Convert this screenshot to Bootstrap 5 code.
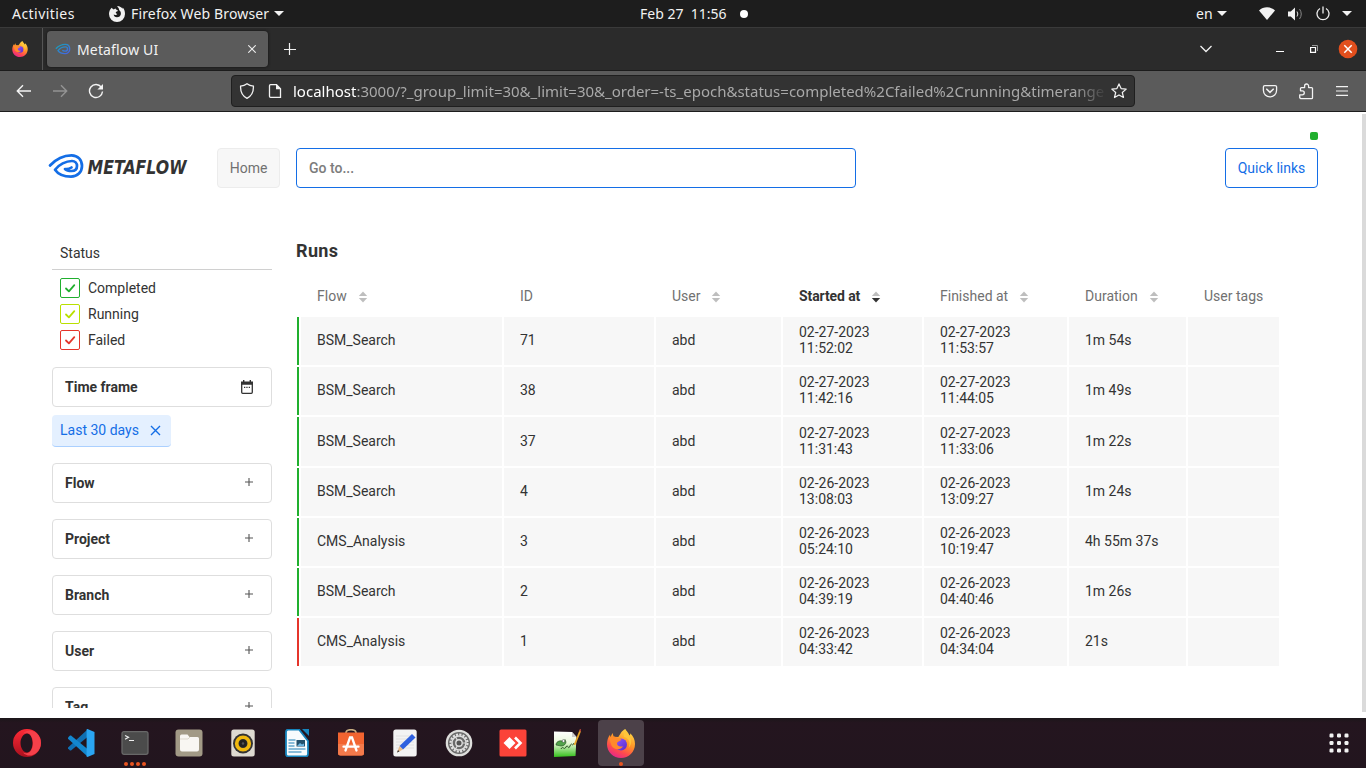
<!DOCTYPE html>
<html lang="en">
<head>
<meta charset="utf-8">
<meta name="viewport" content="width=device-width, initial-scale=1">
<title>Metaflow UI</title>
<link href="https://cdn.jsdelivr.net/npm/bootstrap@5.3.0/dist/css/bootstrap.min.css" rel="stylesheet">
<style>
  html, body { height: 100%; }
  body { width: 1366px; height: 768px; font-family: Roboto, sans-serif; font-size: 14px; line-height: 16px; color: #333; background: #fff; }
  svg { display: block; flex: none; }
  .sys { font-family: "Noto Sans", "Open Sans", sans-serif; font-size: 14px; line-height: 20px; color: #f2f2f2; white-space: nowrap; }
  .topbar { height: 27px; background: #1d1d1d; }
  .tabbar { height: 44px; background: #2b2b2b; border-top: 1px solid #3a3a3a; border-bottom: 1px solid #1c1c1c; }
  .pinned { width: 43px; border-right: 1px solid #555; }
  .browser-tab { width: 221px; height: 36px; margin: 3px 0 0 4px; background: #5b5b5b; border-radius: 4px; box-shadow: 0 0 3px #111; padding-left: 8px; }
  .toolbar { height: 41px; background: #5b5b5b; border-bottom: 1px solid #1c1c1c; }
  .urlbar { width: 904px; height: 32px; background: #333; border: 1px solid #1f1f1f; border-radius: 4px; }
  .url { width: 814px; overflow: hidden; font-size: 15px; color: #a9a9a9; -webkit-mask-image: linear-gradient(90deg, #000 96%, transparent); mask-image: linear-gradient(90deg, #000 96%, transparent); }
  .url b { font-weight: 400; color: #fff; }
  .caret { width: 0; height: 0; border: 5px solid transparent; border-top-color: #f2f2f2; border-bottom: 0; }

  .viewport { height: 606px; }
  .scroller { width: 4px; height: 598px; top: 2px; left: 1362px; background: #dadada; }
  .online { width: 8px; height: 8px; top: 20px; left: 1310px; background: #20af2e; border-radius: 2px; }
  .page-head { padding: 36px 48px 0; height: 76px; }
  .btn-mf { height: 40px; font-size: 14px; line-height: 16px; padding: 11px 11px; border-radius: 4px; }
  .btn-home { --bs-btn-color: #717171; --bs-btn-bg: #f7f7f7; --bs-btn-border-color: #ececec; width: 63px; }
  .btn-quick { --bs-btn-color: #146ee6; --bs-btn-bg: #fff; --bs-btn-border-color: #146ee6; width: 93px; }
  .goto { width: 560px; height: 40px; font-size: 14px; font-weight: 500; border: 1px solid #146ee6; border-radius: 4px; padding: 0 12px; }
  .goto::placeholder { color: #7c7c7c; opacity: 1; }

  .page-body { height: 520px; padding-left: 52px; }
  .filters { width: 220px; }
  .filter-title { height: 33px; padding: 8px 8px 0; border-bottom: 1px solid #d0d0d0; }
  .status-row { height: 26px; }
  .tick { width: 20px; height: 20px; border: 1px solid; border-radius: 2px; }
  .tick svg { margin: 3px 0 0 3px; }
  .fbox { height: 40px; border: 1px solid #dedede; border-radius: 4px; padding: 0 16px 0 12px; flex: none; }
  .fbox .plus { margin: 0 2px 2px 0; }
  .chip { width: 119px; height: 32px; color: #146ee6; background: #e4f0ff; border-bottom: 1px solid #abd0ff; border-radius: 4px; padding: 0 10px 1px 8px; }

  h1.runs-title { font-size: 18px; line-height: 22px; font-weight: 700; letter-spacing: .35px; margin: 16px 0 0 1px; }
  .runs { table-layout: fixed; width: 986px; border-collapse: separate; border-spacing: 2px; margin: 11.18px 0 0 0; }
  .runs th { height: 40px; font-weight: 400; color: #717171; padding: 2px 0 0 16px; white-space: nowrap; vertical-align: middle; }
  .runs th svg { display: inline-block; margin-left: 7.5px; vertical-align: -2px; }
  .runs th.sorted { color: #333; font-weight: 700; letter-spacing: -.1px; }
  .runs th.sorted svg { margin-left: 7px; }
  .runs td { height: 48.17px; background: #f7f7f7; padding: 0 16px 2px; vertical-align: middle; }
  .runs td:first-child { padding: 0; background: #20af2e; }
  .runs tr.failed td:first-child { background: #e5352b; }

  .dock { height: 50px; background: linear-gradient(#1c161a, #24151f 5px, #22151e); }
  .dock-item { width: 54px; height: 50px; }
  .dock-item.active::before { content: ""; position: absolute; left: 4px; top: 2px; width: 46px; height: 46px; border-radius: 4px; background: #4c4149; }
  .dock-item svg { position: relative; }
  .pips { left: 0; right: 0; bottom: 2px; gap: 2px; }
  .pips i { width: 4px; height: 4px; border-radius: 50%; background: #e95420; }
</style>
</head>
<body class="d-flex flex-column overflow-hidden">

<svg width="0" height="0" class="position-absolute" aria-hidden="true">
  <defs>
    <linearGradient id="ffo" x1=".8" y1="0" x2=".3" y2="1"><stop offset="0" stop-color="#ffe14a"/><stop offset=".45" stop-color="#ff9426"/><stop offset=".75" stop-color="#ff4a4e"/><stop offset="1" stop-color="#e5258c"/></linearGradient>
    <linearGradient id="ffp" x1="0" y1="0" x2="1" y2="1"><stop offset="0" stop-color="#9059ff"/><stop offset="1" stop-color="#592acb"/></linearGradient>
    <linearGradient id="mfg" x1="0" y1="0" x2="1" y2="1"><stop offset="0" stop-color="#12a5b5"/><stop offset="1" stop-color="#4a62e8"/></linearGradient>
    <linearGradient id="opr" x1="0" y1="0" x2="0" y2="1"><stop offset="0" stop-color="#ff2a36"/><stop offset="1" stop-color="#a8101e"/></linearGradient>
    <linearGradient id="npp" x1="0" y1="0" x2="0" y2="1"><stop offset="0" stop-color="#fff"/><stop offset=".45" stop-color="#e8f8d8"/><stop offset="1" stop-color="#35c01c"/></linearGradient>
    <symbol id="firefox" viewBox="0 0 28 29">
      <path d="M18.300 0c1 2.400 3.400 3.600 4.200 6.600.7-.5.900-1.400.8-2.300C26.500 7.500 28 11 28 15c0 8-6.300 14-14 14S0 23 0 15.300C0 11.800 1 8 3 5.700l.4 2.600L5.500 4l1.200 3.700 4.600.200C13.500 5 14.300 2 18.300 0z" fill="url(#ffo)"/>
      <circle cx="14" cy="15.500" r="6" fill="url(#ffp)"/>
      <path d="M2 9c2-1.800 6-2 8.600.200l3.600 1.100c-.3 1.900-3.600 2-4.200 3.700-.2 2.600 2.500 4.500 6 3.200-2 4-9 4.300-11.500-.7z" fill="#ff8a2b"/>
      <path d="M17 8c5 1 7 6 4.500 11 2.500-2 4-8 1-12-1.200-2-3.500-4-4-6-1.500 2-2 4.500-1.500 7z" fill="#ffc53a"/>
    </symbol>
    <symbol id="sort" viewBox="0 0 10 12"><path d="M.8 5 5 .5 9.200 5z"/><path d="M.8 7 5 11.500 9.200 7z"/></symbol>
    <symbol id="check" viewBox="0 0 12 12"><path d="M2 6.500 4.900 9.400 10.300 3.200" fill="none" stroke="currentColor" stroke-width="1.800" stroke-linecap="round" stroke-linejoin="round"/></symbol>
    <symbol id="plus" viewBox="0 0 8 8"><path d="M4 0v8M0 4h8" stroke="#555" stroke-width="1.100"/></symbol>
  </defs>
</svg>

<!-- Desktop top bar -->
<header class="topbar sys d-flex align-items-center flex-shrink-0 position-relative">
  <span style="margin-left:12px;width:97px;letter-spacing:.45px">Activities</span>
  <svg width="16" height="16" viewBox="0 0 16 16"><path d="M8.200 0c.4 1.600 2 2 2 4.200 0 0 2 1 1.700 3.800-.2 2-1.900 3.300-3.900 3.300-2 0-3.300-1.300-3.300-2.700 1.500.9 3 .3 3.600-.7-1.700-.2-1.900-1.500-1-2.100.6-.5 1.700-.5 1.700-1.200-1-.6-2-.9-2.400-2.100-1 .3-1.500.7-1.800 1.100L3.900 3.100 2.700 1.700C1 3 0 5.500 0 8a8 8 0 0 0 16 0c0-2.700-.8-4.800-2.300-6.500v1.300C12.500 1.500 10.800.2 8.200 0z" fill="#f2f2f2"/></svg>
  <span style="margin-left:6px;width:143px;letter-spacing:.15px">Firefox Web Browser</span>
  <span class="caret"></span>
  <span style="margin-left:356px;width:100px;white-space:pre">Feb 27  11:56</span>
  <span class="rounded-circle bg-white" style="width:8px;height:8px"></span>
  <span style="margin-left:448px;width:21px">en</span>
  <span class="caret"></span>
  <svg style="margin-left:32px" width="16" height="13" viewBox="0 0 16 13"><path d="M0 3.500C4.500-.8 11.500-.8 16 3.500L8 13z" fill="#f2f2f2"/></svg>
  <svg style="margin-left:13px" width="15" height="14" viewBox="0 0 15 14"><path d="M0 4.500h2.800L7 .5v13L2.800 9.500H0z" fill="#f2f2f2"/><path d="M9 4.500q1.700 2.500 0 5" fill="none" stroke="#ddd"/><path d="M11.500 2q3.500 5 0 10" fill="none" stroke="#888"/></svg>
  <svg style="margin-left:13px" width="14" height="15" viewBox="0 0 14 15"><path d="M4 2.500a6 6 0 1 0 6 0M7 .5v7" fill="none" stroke="#eee" stroke-width="1.300"/></svg>
  <span class="caret" style="margin-left:12px"></span>
</header>

<!-- Browser tabs -->
<div class="tabbar sys d-flex flex-shrink-0">
  <div class="pinned d-flex align-items-center justify-content-center" style="padding-right:2px"><svg width="16" height="16"><use href="#firefox"/></svg></div>
  <div class="browser-tab d-flex align-items-center">
    <svg width="16" height="12" viewBox="0 0 37 26"><path d="M2 12.500C8 6 16 2.300 23.500 2.300 30 2.300 34 7 34 13s-4.500 10.600-11 10.600c-7 0-13-2.600-16-6.900C11 11.500 18 8 24 8c3 0 5 2 5 5s-2 5-5.500 5c-3 0-5-.5-6.500-2" fill="none" stroke="url(#mfg)" stroke-width="3.200"/></svg>
    <span style="margin-left:6px;padding-top:2px;width:124px;letter-spacing:.15px">Metaflow UI</span>
    <svg style="margin-left:47px" width="8" height="8" viewBox="0 0 8 8"><path d="M.3.3l7.400 7.400M7.700.3.3 7.700" stroke="#eee" stroke-width="1.100"/></svg>
  </div>
  <svg class="align-self-center" style="margin-left:16px" width="12" height="12" viewBox="0 0 12 12"><path d="M5.500 0v12M0 6.500h12" stroke="#f2f2f2" stroke-width="1.200"/></svg>
  <svg class="align-self-center" style="margin-left:904px" width="12" height="8" viewBox="0 0 12 8"><path d="M.5 1 6 6.500 11.500 1" fill="none" stroke="#f2f2f2" stroke-width="1.300"/></svg>
  <svg style="margin:23px 0 0 64px" width="8" height="1" viewBox="0 0 8 1"><path d="M0 .5h8" stroke="#fff"/></svg>
  <svg style="margin:17px 0 0 26px" width="8" height="8" viewBox="0 0 8 8"><path d="M2 .5h5.500V6" fill="none" stroke="#999"/><path d="M.6 2.500h4.900v4.900H.6z" fill="none" stroke="#fff" stroke-width="1.200"/></svg>
  <svg style="margin:11px 0 0 20px" width="20" height="20" viewBox="0 0 20 20"><circle cx="10" cy="10" r="9.300" fill="#e24f1d"/><path d="M6.300 6.300l7.400 7.400M13.700 6.300 6.300 13.700" stroke="#fff" stroke-width="1.500"/></svg>
</div>

<!-- Address bar -->
<div class="toolbar sys d-flex align-items-center flex-shrink-0">
  <svg style="margin-left:16px" width="16" height="16" viewBox="0 0 16 16"><path d="M15 8H1.500M7 2.300 1.300 8 7 13.700" fill="none" stroke="#f4f4f4" stroke-width="1.400"/></svg>
  <svg style="margin-left:20px" width="16" height="16" viewBox="0 0 16 16"><path d="M1 8h13.500M9 2.300 14.700 8 9 13.700" fill="none" stroke="#949494" stroke-width="1.400"/></svg>
  <svg style="margin-left:20px" width="16" height="16" viewBox="0 0 16 16"><path d="M13.300 4.200A6.500 6.500 0 1 0 14.500 8.500" fill="none" stroke="#f4f4f4" stroke-width="1.400"/><path d="M15 1v5.600H9.400z" fill="#f4f4f4"/></svg>
  <div class="urlbar d-flex align-items-center" style="margin-left:127px">
    <svg style="margin-left:7px" width="16" height="16" viewBox="0 0 16 16"><path d="M8 .8C9.800 2.200 12 3 14.400 3.200 14.700 9 12.500 13 8 15.300 3.500 13 1.300 9 1.600 3.200 4 3 6.200 2.200 8 .8z" fill="none" stroke="#f2f2f2" stroke-width="1.300"/></svg>
    <svg style="margin-left:12px" width="16" height="16" viewBox="0 0 16 16"><path d="M3.500 1.700h6l4 4v8.600h-10a1 1 0 0 1-1-1V2.700a1 1 0 0 1 1-1z" fill="none" stroke="#f2f2f2" stroke-width="1.300"/><path d="M9 1l5.200 5.200H9z" fill="#f2f2f2"/></svg>
    <div class="url" style="margin-left:10px"><b>localhost</b>:3000/?_group_limit=30&amp;_limit=30&amp;_order=-ts_epoch&amp;status=completed%2Cfailed%2Crunning&amp;timerange</div>
    <svg style="margin-left:4px" width="16" height="16" viewBox="0 0 16 16"><path d="M8 .9 10.100 5.600l5.100.5-3.900 3.400 1.200 5L8 11.900l-4.500 2.600 1.200-5L.8 6.100l5.100-.5z" fill="none" stroke="#f2f2f2" stroke-width="1.200" stroke-linejoin="round"/></svg>
  </div>
  <svg style="margin-left:127px" width="16" height="16" viewBox="0 0 16 16"><path d="M2.800 2.600h10.400a1.400 1.400 0 0 1 1.400 1.400v3.300a6.600 6.600 0 0 1-13.200 0V4a1.400 1.400 0 0 1 1.400-1.400z" fill="none" stroke="#f2f2f2" stroke-width="1.300"/><path d="M4.800 6.200 8 9.300l3.200-3.100" fill="none" stroke="#f2f2f2" stroke-width="1.600" stroke-linecap="round"/></svg>
  <svg style="margin-left:20px" width="17" height="17" viewBox="0 0 17 17"><path d="M2.600 15.600h11a.9.9 0 0 0 .9-.9V5.500a.9.900 0 0 0-.9-.9h-3V3a2 2 0 0 0-4 0v1.600H3.400a.9.900 0 0 0-.9.900v2.300h1.800a1.800 1.800 0 0 1 0 4H1.700v3z" fill="none" stroke="#f2f2f2" stroke-width="1.300" stroke-linejoin="round"/></svg>
  <svg style="margin-left:21px" width="12" height="10" viewBox="0 0 12 10"><path d="M0 .7h12M0 5h12M0 9.300h12" stroke="#f2f2f2" stroke-width="1.200"/></svg>
</div>

<!-- Metaflow page -->
<main class="viewport position-relative flex-shrink-0">
  <span class="online position-absolute"></span>
  <span class="scroller position-absolute"></span>
  <div class="page-head d-flex">
    <svg width="149" height="40" viewBox="0 0 149 40" role="img"><path transform="translate(0 5)" d="M2 12.500C8 6 16 2.300 23.500 2.300 30 2.300 34 7 34 13s-4.500 10.600-11 10.600c-7 0-13-2.600-16-6.900C11 11.500 18 8 24 8c3 0 5 2 5 5s-2 5-5.500 5c-3 0-5-.5-6.500-2q3.500.5 6.500-1.500" fill="none" stroke="#146ee6" stroke-width="2.700" stroke-linecap="round" stroke-linejoin="round"/><text x="39.500" y="25.500" textLength="99" lengthAdjust="spacingAndGlyphs" font-family="DejaVu Sans, sans-serif" font-weight="700" font-style="italic" font-size="20.300" fill="#333">METAFLOW</text></svg>
    <button type="button" class="btn btn-mf btn-home" style="margin-left:20px">Home</button>
    <input type="text" class="goto form-control flex-shrink-0" style="margin-left:16px" placeholder="Go to...">
    <button type="button" class="btn btn-mf btn-quick ms-auto text-nowrap">Quick links</button>
  </div>

  <div class="page-body d-flex overflow-hidden">
    <aside class="filters d-flex flex-column flex-shrink-0" style="padding-top:49px">
      <div class="filter-title flex-shrink-0">Status</div>
      <div class="flex-shrink-0" style="padding:5px 8px 14px">
        <div class="status-row d-flex align-items-center"><span class="tick me-2" style="color:#20af2e"><svg width="12" height="12"><use href="#check"/></svg></span>Completed</div>
        <div class="status-row d-flex align-items-center"><span class="tick me-2" style="color:#b9e000"><svg width="12" height="12"><use href="#check"/></svg></span>Running</div>
        <div class="status-row d-flex align-items-center"><span class="tick me-2" style="color:#e5352b"><svg width="12" height="12"><use href="#check"/></svg></span>Failed</div>
      </div>
      <div class="fbox d-flex align-items-center justify-content-between"><b>Time frame</b><svg width="16" height="16" viewBox="0 0 16 16"><path d="M2.700 4h10.600v9.300a1 1 0 0 1-1 1H3.700a1 1 0 0 1-1-1z" fill="none" stroke="#333" stroke-width="1.300"/><path d="M2 2.500h12v3.300H2zM4 1h1.400v3H4zM10.600 1H12v3h-1.400z" fill="#333"/><path d="M5 8.300h1.300M7.300 8.300h1.300M9.700 8.300H11" stroke="#333" stroke-width="1.300"/></svg></div>
      <div class="chip d-flex align-items-center justify-content-between flex-shrink-0 mt-2 mb-3">Last 30 days<svg width="11" height="11" viewBox="0 0 11 11"><path d="M1 1l9 9M10 1l-9 9" stroke="#146ee6" stroke-width="1.400"/></svg></div>
      <div class="fbox d-flex align-items-center justify-content-between mb-3"><b>Flow</b><svg class="plus" width="8" height="8"><use href="#plus"/></svg></div>
      <div class="fbox d-flex align-items-center justify-content-between mb-3"><b>Project</b><svg class="plus" width="8" height="8"><use href="#plus"/></svg></div>
      <div class="fbox d-flex align-items-center justify-content-between mb-3"><b>Branch</b><svg class="plus" width="8" height="8"><use href="#plus"/></svg></div>
      <div class="fbox d-flex align-items-center justify-content-between mb-3"><b>User</b><svg class="plus" width="8" height="8"><use href="#plus"/></svg></div>
      <div class="fbox d-flex align-items-center justify-content-between"><b>Tag</b><svg class="plus" width="8" height="8"><use href="#plus"/></svg></div>
    </aside>

    <section style="margin-left:23px;padding-top:36px">
      <h1 class="runs-title">Runs</h1>
      <table class="runs">
        <colgroup><col style="width:2px"><col style="width:201px"><col style="width:150px"><col style="width:125px"><col style="width:139px"><col style="width:143px"><col style="width:117px"><col style="width:91px"></colgroup>
        <thead>
          <tr><th class="p-0"></th><th>Flow <svg width="10" height="12" fill="#bebebe"><use href="#sort"/></svg></th><th>ID</th><th>User <svg width="10" height="12" fill="#bebebe"><use href="#sort"/></svg></th><th class="sorted">Started at <svg width="10" height="12" viewBox="0 0 10 12"><path d="M.8 5 5 .5 9.200 5z" fill="#bebebe"/><path d="M.8 7 5 11.500 9.200 7z" fill="#333"/></svg></th><th>Finished at <svg width="10" height="12" fill="#bebebe"><use href="#sort"/></svg></th><th>Duration <svg width="10" height="12" fill="#bebebe"><use href="#sort"/></svg></th><th>User tags</th></tr>
        </thead>
        <tbody>
          <tr><td></td><td>BSM_Search</td><td>71</td><td>abd</td><td>02-27-2023<br>11:52:02</td><td>02-27-2023<br>11:53:57</td><td>1m 54s</td><td></td></tr>
          <tr><td></td><td>BSM_Search</td><td>38</td><td>abd</td><td>02-27-2023<br>11:42:16</td><td>02-27-2023<br>11:44:05</td><td>1m 49s</td><td></td></tr>
          <tr><td></td><td>BSM_Search</td><td>37</td><td>abd</td><td>02-27-2023<br>11:31:43</td><td>02-27-2023<br>11:33:06</td><td>1m 22s</td><td></td></tr>
          <tr><td></td><td>BSM_Search</td><td>4</td><td>abd</td><td>02-26-2023<br>13:08:03</td><td>02-26-2023<br>13:09:27</td><td>1m 24s</td><td></td></tr>
          <tr><td></td><td>CMS_Analysis</td><td>3</td><td>abd</td><td>02-26-2023<br>05:24:10</td><td>02-26-2023<br>10:19:47</td><td>4h 55m 37s</td><td></td></tr>
          <tr><td></td><td>BSM_Search</td><td>2</td><td>abd</td><td>02-26-2023<br>04:39:19</td><td>02-26-2023<br>04:40:46</td><td>1m 26s</td><td></td></tr>
          <tr class="failed"><td></td><td>CMS_Analysis</td><td>1</td><td>abd</td><td>02-26-2023<br>04:33:42</td><td>02-26-2023<br>04:34:04</td><td>21s</td><td></td></tr>
        </tbody>
      </table>
    </section>
  </div>
</main>

<!-- Desktop dock -->
<footer class="dock d-flex flex-shrink-0">
  <div class="dock-item d-flex align-items-center justify-content-center"><svg width="28" height="28" viewBox="0 0 28 28"><path d="M14 0a14 14 0 1 0 0 28 14 14 0 0 0 0-28zm0 4.500c3.300 0 5.500 4.200 5.500 9.500s-2.200 9.500-5.500 9.500S7.500 19.300 7.500 14 10.700 4.500 14 4.500z" fill="url(#opr)"/><path d="M10 4.500C14 0 20 1 23.300 4 30 10 29 19 23.300 24 20 27 14 28 10 23.500c6 3 10-3 10-9.500S16 1.500 10 4.500z" fill="#f4404a"/></svg></div>
  <div class="dock-item d-flex align-items-center justify-content-center"><svg width="28" height="28" viewBox="0 0 28 28"><path d="M1 18.500 20.500.5v7.500L4 21.500H3L1 19.500z" fill="#0f6fb3"/><path d="M1 8.500 3 6.500h1L20.500 20v7.500L1 9.700z" fill="#1387cf"/><path d="M20.500 0 27.500 3v22l-7 3c-.7 0-.9-.3-.9-.9V.9c0-.6.200-.9.900-.9z" fill="#2aa5f2"/></svg></div>
  <div class="dock-item position-relative d-flex align-items-center justify-content-center"><svg width="28" height="24" viewBox="0 0 28 24"><rect x="1" y=".7" width="26" height="22.600" rx="2" fill="#4b4b4b" stroke="#686868" stroke-width="1.300"/><path d="M4 4.500l3.500 1.800L4 8.200M8 9.500h5" fill="none" stroke="#eee" stroke-width="1.200"/></svg><div class="pips position-absolute d-flex justify-content-center"><i></i><i></i><i></i><i></i></div></div>
  <div class="dock-item d-flex align-items-center justify-content-center"><svg width="28" height="28" viewBox="0 0 28 28"><rect x=".5" y=".5" width="27" height="27" rx="3" fill="#a29a86"/><path d="M5 7a1.500 1.500 0 0 1 1.500-1.500h6L14.500 8h8A1.500 1.500 0 0 1 24 9.500v11a2 2 0 0 1-2 2H7a2 2 0 0 1-2-2z" fill="#f8f6f2"/><path d="M5 10h8l2-2" stroke="#ddd8cd" fill="none"/></svg></div>
  <div class="dock-item d-flex align-items-center justify-content-center"><svg width="24" height="28" viewBox="0 0 24 28"><rect x=".3" y=".5" width="23.400" height="27" rx="2.500" fill="#dedad1"/><circle cx="12" cy="14.500" r="10" fill="#333"/><circle cx="12" cy="14.500" r="6.300" fill="none" stroke="#f1b90d" stroke-width="3.600"/><circle cx="12" cy="14.500" r="3.800" fill="#222"/><circle cx="12" cy="14.500" r="1.200" fill="#555"/></svg></div>
  <div class="dock-item d-flex align-items-center justify-content-center"><svg width="24" height="28" viewBox="0 0 24 28"><path d="M3 .5h11L23 12v13a2.500 2.500 0 0 1-2.500 2.500h-17A2.500 2.500 0 0 1 1 25V3a2.500 2.500 0 0 1 2-2.500z" fill="#f7fbfd" stroke="#1684bd" stroke-width="1.800"/><path d="M17 0h7v7z" fill="#1684bd"/><path d="M3.500 11h7M3.500 14h6M3.500 17h6M3.500 20h17M3.500 23h13" stroke="#1d7fb5" stroke-width="1.200"/><rect x="11.500" y="11" width="8.500" height="6.500" fill="#24516c"/><path d="M12 17l3-3 2 1.500 2-1v2.500z" fill="#6cb5e0"/></svg></div>
  <div class="dock-item d-flex align-items-center justify-content-center"><svg width="28" height="28" viewBox="0 0 28 28"><path d="M9 5V3.500Q9.500.7 14 .7t5 2.800V5" fill="none" stroke="#c9ae82" stroke-width="1.600"/><path d="M1 3.500h26V24a2.500 2.500 0 0 1-2.500 2.500h-21A2.500 2.500 0 0 1 1 24z" fill="#f26430"/><path d="M1 15h26v9a2.500 2.500 0 0 1-2.500 2.500h-21A2.500 2.500 0 0 1 1 24z" fill="#f47a4b"/><path d="M8.500 21.500 13 8.500h2l4.500 13M6.500 17.700h15" fill="none" stroke="#fff" stroke-width="2.300" stroke-linecap="round"/></svg></div>
  <div class="dock-item d-flex align-items-center justify-content-center"><svg width="24" height="28" viewBox="0 0 24 28"><rect x=".3" y=".5" width="23.400" height="27" rx="2.500" fill="#f3f3f3"/><path d="M3 7h18M3 10h18M3 13h18M3 16h18M3 19h18" stroke="#dcdcdc" stroke-width=".8"/><path d="M19 5 22.500 8.500 10 20.500 6.500 17z" fill="#2f61df"/><path d="M6.500 17 10 20.500 4 23.500z" fill="#e7bd8d"/><path d="M4 23.500l1-2.500 1.500 1.500z" fill="#333"/></svg></div>
  <div class="dock-item d-flex align-items-center justify-content-center"><svg width="28" height="28" viewBox="0 0 28 28"><circle cx="14" cy="14" r="13.300" fill="#dededc"/><circle cx="14" cy="14" r="11" fill="#686868"/><circle cx="14" cy="14" r="8.500" fill="none" stroke="#e2e2e2" stroke-width="2.200" stroke-dasharray="2.200 1.137"/><circle cx="14" cy="14" r="7" fill="#6a6a6a" stroke="#ddd" stroke-width="1.500"/><path d="M14 14h7M14 14l-3.500-6M14 14l-3.500 6" stroke="#ddd" stroke-width="1.200"/><circle cx="14" cy="14" r="3.200" fill="#555" stroke="#ddd" stroke-width="1.400"/></svg></div>
  <div class="dock-item d-flex align-items-center justify-content-center"><svg width="28" height="28" viewBox="0 0 28 28"><rect x=".5" y=".5" width="27" height="27" rx="1.500" fill="#fb4339"/><path d="M10.500 8 16.500 14l-6 6-6-6z" fill="#fff"/><path d="M16 8.500l5.500 5.500-5.500 5.500" fill="none" stroke="#fff" stroke-width="2.600"/></svg></div>
  <div class="dock-item d-flex align-items-center justify-content-center"><svg width="28" height="28" viewBox="0 0 28 28"><path d="M1 2.500l18 .5 4.500 5-1 19L1 28z" fill="url(#npp)"/><path d="M19 3v5h4.500" fill="#ccc"/><path d="M3 16c0-4 5-5 7-3.500l2-2 1 2.500c0 2-2 4-5 4z" fill="#51a34a" stroke="#244a20" stroke-width=".6"/><circle cx="10.500" cy="12" r="1.400" fill="#fff" stroke="#333" stroke-width=".5"/><path d="M8 20c2-4 3 2 5-2s2 4 4-1 2 2 4-3" fill="none" stroke="#31522b"/><path d="M27.500 1 21.500 16" stroke="#e6a526" stroke-width="1.800"/><path d="M28 0l-1 2.500" stroke="#a33b35" stroke-width="2"/></svg></div>
  <div class="dock-item active position-relative d-flex align-items-center justify-content-center"><svg width="28" height="29"><use href="#firefox"/></svg><div class="pips position-absolute d-flex justify-content-center"><i></i></div></div>
  <svg class="ms-auto" style="margin:15px 17px 0 0" width="20" height="20" viewBox="0 0 20 20" fill="#f2f2f2"><rect x=".5" y=".5" width="4" height="4" rx="1.200"/><rect x="8" y=".5" width="4" height="4" rx="1.200"/><rect x="15.500" y=".5" width="4" height="4" rx="1.200"/><rect x=".5" y="8" width="4" height="4" rx="1.200"/><rect x="8" y="8" width="4" height="4" rx="1.200"/><rect x="15.500" y="8" width="4" height="4" rx="1.200"/><rect x=".5" y="15.500" width="4" height="4" rx="1.200"/><rect x="8" y="15.500" width="4" height="4" rx="1.200"/><rect x="15.500" y="15.500" width="4" height="4" rx="1.200"/></svg>
</footer>
<script src="https://cdn.jsdelivr.net/npm/bootstrap@5.3.0/dist/js/bootstrap.bundle.min.js"></script>
</body>
</html>
